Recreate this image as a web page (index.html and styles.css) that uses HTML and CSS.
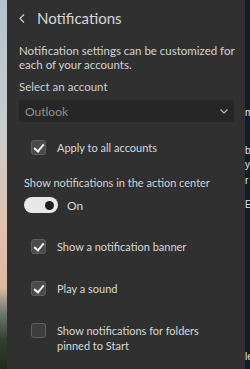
FILE: index.html
```html
<!DOCTYPE html>
<html lang="en">
<head>
    <meta charset="UTF-8">
    <meta name="viewport" content="width=device-width, initial-scale=1.0">
    <title>Notifications</title>
    <link rel="stylesheet" href="styles.css">
</head>
<body>

    <div class="wallpaper"></div>

    <div class="panel">
        <!-- Header -->
        <div class="header">
            <span class="back">
                <svg width="6" height="9" viewBox="0 0 6 9"><path d="M5 0.5 L1 4.5 L5 8.5" fill="none" stroke="#cfcfcf" stroke-width="1.2"/></svg>
            </span>
            <span class="title">Notifications</span>
        </div>

        <p class="intro">Notification settings can be customized for<br>each of your accounts.</p>

        <div class="label">Select an account</div>
        <div class="select">
            <span>Outlook</span>
            <svg width="8" height="5" viewBox="0 0 8 5"><path d="M0.5 0.5 L4 4 L7.5 0.5" fill="none" stroke="#bdbdbd" stroke-width="1.1"/></svg>
        </div>

        <div class="check-row apply">
            <span class="box checked"></span>
            <span>Apply to all accounts</span>
        </div>

        <div class="section-label">Show notifications in the action center</div>
        <div class="toggle-row">
            <span class="toggle"><span class="knob"></span></span>
            <span>On</span>
        </div>

        <div class="options">
            <div class="check-row">
                <span class="box checked"></span>
                <span>Show a notification banner</span>
            </div>
            <div class="check-row">
                <span class="box checked"></span>
                <span>Play a sound</span>
            </div>
            <div class="check-row">
                <span class="box"></span>
                <span>Show notifications for folders<br>pinned to Start</span>
            </div>
        </div>
    </div>

    <div class="behind">
        <span class="frag f1">m</span>
        <span class="frag f2">b</span>
        <span class="frag f3">y</span>
        <span class="frag f5">r</span>
        <span class="frag f6">E</span>
        <span class="frag f7">le</span>
    </div>

</body>
</html>
```

FILE: styles.css
```css
body {
    font-family: Lato, sans-serif;
    margin: 0;
    width: 250px;
    height: 369px;
    display: flex;
    overflow: hidden;
    background-color: #0f1c29;
}

/* Photo strip on the left */
.wallpaper {
    width: 7px;
    flex-shrink: 0;
    background: linear-gradient(to bottom, #b4c2cc 0%, #c9cdcc 35%, #e2c3ae 60%, #d9b9a1 78%, #6c7670 85%, #33402f 92%, #1f2a1d 100%);
}

.panel {
    width: 238px;
    flex-shrink: 0;
    background-color: #303030;
    color: #dcdcdc;
    padding: 0 8px 0 12px;
    box-sizing: border-box;
    font-size: 11.5px;
    white-space: nowrap;
}

.header {
    display: flex;
    align-items: center;
    height: 37px;
}

.back {
    display: flex;
    width: 18px;
}

.title {
    font-size: 15px;
    color: #d6d6d6;
    margin-top: -1px;
}

.intro {
    margin: 7px 0 0;
    line-height: 14px;
    color: #d4d4d4;
}

.label {
    margin-top: 8px;
    line-height: 14px;
    color: #cfcfcf;
}

.select {
    margin-top: 6px;
    height: 22px;
    width: 215px;
    background-color: #262626;
    border-radius: 3px;
    display: flex;
    align-items: center;
    justify-content: space-between;
    padding: 0 6px 0 6px;
    box-sizing: border-box;
    color: #8f8f8f;
    font-size: 12px;
}

.check-row {
    display: flex;
    align-items: flex-start;
    gap: 11px;
    padding-left: 12px;
    line-height: 15px;
    font-size: 11px;
    color: #d8d8d8;
}

.apply {
    margin-top: 18px;
}

.box {
    width: 13px;
    height: 13px;
    flex-shrink: 0;
    border: 1px solid #5e5e5e;
    border-radius: 3px;
    background-color: #3d3d3d;
    position: relative;
}

.box.checked {
    background-color: #4a4a4a;
}

.box.checked::after {
    content: "";
    position: absolute;
    left: 4px;
    top: 1px;
    width: 4px;
    height: 8px;
    border: solid #f2f2f2;
    border-width: 0 2px 2px 0;
    transform: rotate(40deg);
}

.section-label {
    margin-top: 20px;
    padding-left: 5px;
    line-height: 15px;
    font-size: 11px;
    color: #d4d4d4;
}

.toggle-row {
    display: flex;
    align-items: center;
    gap: 9px;
    padding-left: 5px;
    margin-top: 7px;
    font-size: 12px;
    color: #d8d8d8;
}

.toggle {
    width: 34px;
    height: 16px;
    border-radius: 8px;
    background-color: #e8e8e8;
    display: flex;
    align-items: center;
    justify-content: flex-end;
    padding-right: 4px;
    box-sizing: border-box;
}

.knob {
    width: 9px;
    height: 9px;
    border-radius: 50%;
    background-color: #1e1e1e;
}

.options {
    margin-top: 26px;
    display: flex;
    flex-direction: column;
    gap: 27px;
}

/* Window behind the panel */
.behind {
    flex: 1;
    position: relative;
    overflow: hidden;
    color: #e6e6e6;
    font-size: 10px;
    font-family: "Liberation Sans", sans-serif;
}

.frag {
    position: absolute;
    left: 0;
    line-height: 10px;
}

.f1 { top: 108px; }
.f2 { top: 146px; }
.f3 { top: 160px; }
.f5 { top: 176px; }
.f6 { top: 200px; }
.f7 { top: 352px; }
```
